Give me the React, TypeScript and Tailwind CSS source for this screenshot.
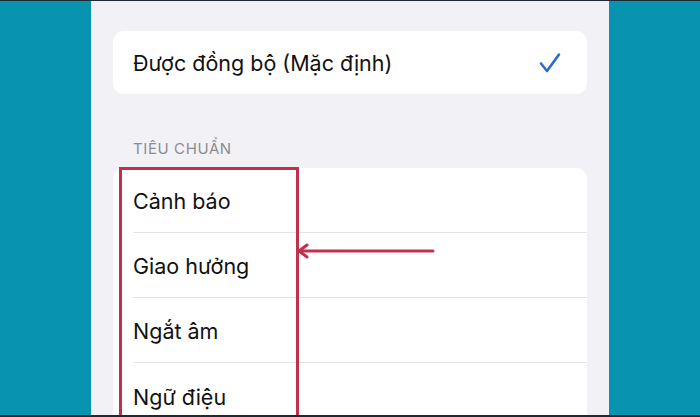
import React from 'react';

const rows = ['Cảnh báo', 'Giao hưởng', 'Ngắt âm', 'Ngữ điệu'];

const App: React.FC = () => {
  return (
    <div
      className="relative w-[700px] h-[417px] flex overflow-hidden border-t border-b-2 border-[#1c2a36] bg-[#0894b0]"
      style={{ fontFamily: 'Inter, "Noto Sans", sans-serif' }}
    >
      {/* Left teal strip */}
      <div className="w-[91px] shrink-0 bg-[#0894b0]" />

      {/* Phone screen */}
      <div className="w-[518px] shrink-0 bg-[#f1f1f6] px-[22px] pt-[30px]">
        <div className="h-[63px] rounded-[11px] bg-white flex items-center justify-between pl-[20px] pr-[26px]">
          <span className="text-[21.5px] text-[#111] pt-[1px]">Được đồng bộ (Mặc định)</span>
          <svg width="22" height="22" viewBox="0 0 22 22" fill="none">
            <path d="M2 11.5 L8 19 L20 2.5" stroke="#2c6cc9" strokeWidth="2.6" strokeLinecap="round" strokeLinejoin="round" />
          </svg>
        </div>

        <div className="pl-[20px] pt-[46px] pb-[10px] text-[15px] leading-[18px] text-[#8c8c91] tracking-[0.6px]">
          TIÊU CHUẨN
        </div>

        <div className="rounded-t-[11px] bg-white">
          {rows.map((r, i) => (
            <div key={r} className="pl-[20px]">
              <div
                className={`h-[65px] flex items-center pt-[3px] text-[21.5px] text-[#111] ${
                  i < rows.length - 1 ? 'border-b border-[#e4e4e8]' : ''
                }`}
              >
                {r}
              </div>
            </div>
          ))}
        </div>
      </div>

      {/* Right teal strip */}
      <div className="flex-1 bg-[#0894b0]" />

      {/* Red highlight box */}
      <div className="absolute left-[119px] top-[166px] w-[180px] h-[251px] border-[3px] border-[#c3304b]" />

      {/* Arrow */}
      <svg className="absolute left-[296px] top-[240px]" width="140" height="20" viewBox="0 0 140 20" fill="none">
        <path d="M4 10 H137" stroke="#c3304b" strokeWidth="3" strokeLinecap="round" />
        <path d="M11 4 L3 10 L11 16" stroke="#c3304b" strokeWidth="3" strokeLinecap="round" strokeLinejoin="round" />
      </svg>
    </div>
  );
};

export default App;
